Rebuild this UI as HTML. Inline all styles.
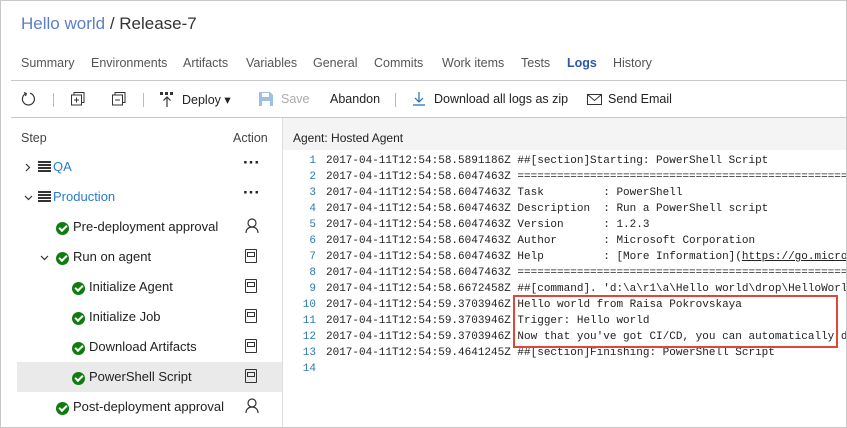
<!DOCTYPE html>
<html><head><meta charset="utf-8"><style>
*{margin:0;padding:0;box-sizing:border-box}
body{width:847px;height:428px;overflow:hidden;background:#fff;font-family:"Liberation Sans",sans-serif;color:#333;position:relative}
.frame{position:absolute;left:0;top:0;width:847px;height:428px;border:1px solid #c8c8c8}
.abs{position:absolute;white-space:nowrap}
.title{left:21px;top:14px;font-size:17px;color:#333}
.title span{color:#5b7fc7}
.tab{top:56px;font-size:12.5px;color:#555}
.hline{position:absolute;left:11px;right:1px;height:1px;background:#c8c8c8}
.tb{top:92px;font-size:12.5px;color:#222}
.sep{position:absolute;width:1px;height:14px;background:#bbb;top:93px}
.tree{font-size:13px;color:#222}
.ok{position:absolute;width:13px;height:13px;border-radius:50%;background:#107c10}
.ok:after{content:"";position:absolute;left:3px;top:3px;width:6px;height:3px;border-left:2px solid #fff;border-bottom:2px solid #fff;transform:rotate(-45deg)}
.log{font-family:"Liberation Mono",monospace;font-size:11px;color:#222;line-height:16px}
.ln{position:absolute;left:283px;width:33px;text-align:right;color:#2b7bb9;font-family:"Liberation Mono",monospace;font-size:11px;line-height:16px}
.srv{position:absolute;width:13px;height:12px;background:repeating-linear-gradient(#333 0 2px,#fff 2px 3px)}
.note{position:absolute;width:12px;height:14px;border:1.5px solid #333;border-radius:1px}
.note:after{content:"";position:absolute;left:1px;right:1px;top:2px;height:3px;border:1px solid #333}
.dots{position:absolute;left:243px;font-weight:bold;font-size:17px;letter-spacing:0;color:#222;line-height:10px}
</style></head><body>
<div class="frame"></div>
<div class="abs title"><span>Hello world</span> / Release-7</div>
<div class="abs tab" style="left:21px">Summary</div>
<div class="abs tab" style="left:91px">Environments</div>
<div class="abs tab" style="left:183px">Artifacts</div>
<div class="abs tab" style="left:246px">Variables</div>
<div class="abs tab" style="left:313px">General</div>
<div class="abs tab" style="left:374px">Commits</div>
<div class="abs tab" style="left:442px">Work items</div>
<div class="abs tab" style="left:521px">Tests</div>
<div class="abs tab" style="left:567px;color:#2f57a8;font-weight:bold">Logs</div>
<div class="abs tab" style="left:613px">History</div>
<div class="hline" style="top:80px"></div>
<svg class="abs" style="left:21px;top:91px" width="16" height="16" viewBox="0 0 16 16"><path d="M5 2.5A6 6 0 1 0 9 2.2" fill="none" stroke="#333" stroke-width="1.2"/><path d="M3 1.5L5.3 2.6 4.5 5" fill="none" stroke="#333" stroke-width="1.2"/></svg>
<div class="sep" style="left:53px"></div>
<svg class="abs" style="left:71px;top:92px" width="14" height="14"><rect x="3" y="0.5" width="10" height="10" fill="none" stroke="#333"/><rect x="0.5" y="3" width="10" height="10" fill="#fff" stroke="#333"/><path d="M3 8h5M5.5 5.5v5" stroke="#333"/></svg>
<svg class="abs" style="left:112px;top:92px" width="14" height="14"><rect x="3" y="0.5" width="10" height="10" fill="none" stroke="#333"/><rect x="0.5" y="3" width="10" height="10" fill="#fff" stroke="#333"/><path d="M3 8h5" stroke="#333"/></svg>
<div class="sep" style="left:143px"></div>
<svg class="abs" style="left:160px;top:92px" width="14" height="16"><rect x="0" y="0" width="3" height="3" fill="#333"/><rect x="5" y="0" width="3" height="3" fill="#333"/><rect x="10" y="0" width="3" height="3" fill="#333"/><path d="M7 15V5M3.5 8.5L7 5l3.5 3.5" fill="none" stroke="#333" stroke-width="1.2"/></svg>
<div class="abs tb" style="left:182px">Deploy ▾</div>
<svg class="abs" style="left:259px;top:92px" width="14" height="14"><path d="M0 0h11l3 3v11H0z" fill="#9bbfe6"/><rect x="3" y="1" width="7" height="4" fill="#fff"/><rect x="3" y="9" width="8" height="5" fill="#fff"/></svg>
<div class="abs tb" style="left:281px;color:#aaa">Save</div>
<div class="abs tb" style="left:330px">Abandon</div>
<div class="sep" style="left:395px"></div>
<svg class="abs" style="left:412px;top:92px" width="14" height="14"><path d="M7 0v10M3 6l4 4 4-4M1 13h12" fill="none" stroke="#2b6cb0" stroke-width="1.2"/></svg>
<div class="abs tb" style="left:434px">Download all logs as zip</div>
<svg class="abs" style="left:587px;top:94px" width="15" height="11"><rect x="0.5" y="0.5" width="14" height="10" fill="none" stroke="#333"/><path d="M0.5 0.5l7 6 7-6" fill="none" stroke="#333"/></svg>
<div class="abs tb" style="left:608px">Send Email</div>
<div class="hline" style="top:117px"></div>
<div class="abs" style="left:283px;top:118px;width:563px;height:32px;background:#f4f4f4"></div>
<div class="abs" style="left:282px;top:118px;width:1px;height:309px;background:#ddd"></div>
<div class="abs" style="left:293px;top:131px;font-size:12px;color:#222">Agent: Hosted Agent</div>
<div class="abs" style="left:21px;top:131px;font-size:12.5px;color:#444">Step</div>
<div class="abs" style="left:233px;top:131px;font-size:12.5px;color:#444">Action</div>
<div class="abs" style="left:17px;top:362px;width:265px;height:30px;background:#eaeaea"></div>
<svg class="abs" style="left:25px;top:163px" width="6" height="9"><path d="M1 1l3.5 3.5L1 8" fill="none" stroke="#333" stroke-width="1.2"/></svg>
<div class="srv" style="left:38px;top:161px"></div>
<div class="abs tree" style="left:53px;top:159px;color:#2b7bd0">QA</div>
<svg class="abs" style="left:24px;top:195px" width="9" height="6"><path d="M1 1l3.5 3.5L8 1" fill="none" stroke="#333" stroke-width="1.2"/></svg>
<div class="srv" style="left:38px;top:191px"></div>
<div class="abs tree" style="left:53px;top:189px;color:#2b7bd0">Production</div>
<div class="dots" style="top:158px">···</div>
<div class="dots" style="top:188px">···</div>
<div class="ok" style="left:56px;top:222px"></div><div class="abs tree" style="left:73px;top:219px">Pre-deployment approval</div>
<svg class="abs" style="left:40px;top:255px" width="9" height="6"><path d="M1 1l3.5 3.5L8 1" fill="none" stroke="#333" stroke-width="1.2"/></svg>
<div class="ok" style="left:56px;top:252px"></div><div class="abs tree" style="left:73px;top:249px">Run on agent</div>
<div class="ok" style="left:72px;top:282px"></div><div class="abs tree" style="left:89px;top:279px">Initialize Agent</div>
<div class="ok" style="left:72px;top:312px"></div><div class="abs tree" style="left:89px;top:309px">Initialize Job</div>
<div class="ok" style="left:72px;top:342px"></div><div class="abs tree" style="left:89px;top:339px">Download Artifacts</div>
<div class="ok" style="left:72px;top:372px"></div><div class="abs tree" style="left:89px;top:369px">PowerShell Script</div>
<div class="ok" style="left:56px;top:402px"></div><div class="abs tree" style="left:73px;top:399px">Post-deployment approval</div>
<svg class="abs" style="left:245px;top:218px" width="14" height="15"><circle cx="7" cy="5" r="4" fill="none" stroke="#333" stroke-width="1.2"/><path d="M1 15c0-4 3-6 6-6s6 2 6 6" fill="none" stroke="#333" stroke-width="1.2"/></svg>
<svg class="abs" style="left:245px;top:398px" width="14" height="15"><circle cx="7" cy="5" r="4" fill="none" stroke="#333" stroke-width="1.2"/><path d="M1 15c0-4 3-6 6-6s6 2 6 6" fill="none" stroke="#333" stroke-width="1.2"/></svg>
<div class="note" style="left:245px;top:249px"></div>
<div class="note" style="left:245px;top:279px"></div>
<div class="note" style="left:245px;top:309px"></div>
<div class="note" style="left:245px;top:339px"></div>
<div class="note" style="left:245px;top:369px"></div>
<div class="ln" style="top:153px">1<br>2<br>3<br>4<br>5<br>6<br>7<br>8<br>9<br>10<br>11<br>12<br>13<br>14</div>
<div class="abs log" style="left:326px;top:153px;width:520px;overflow:hidden"><pre style="font:inherit">2017-04-11T12:54:58.5891186Z ##[section]Starting: PowerShell Script
2017-04-11T12:54:58.6047463Z ==============================================================
2017-04-11T12:54:58.6047463Z Task         : PowerShell
2017-04-11T12:54:58.6047463Z Description  : Run a PowerShell script
2017-04-11T12:54:58.6047463Z Version      : 1.2.3
2017-04-11T12:54:58.6047463Z Author       : Microsoft Corporation
2017-04-11T12:54:58.6047463Z Help         : [More Information](<u>https://go.microsoft.com</u>)
2017-04-11T12:54:58.6047463Z ==============================================================
2017-04-11T12:54:58.6672458Z ##[command]. 'd:\a\r1\a\Hello world\drop\HelloWorld.ps1'
2017-04-11T12:54:59.3703946Z Hello world from Raisa Pokrovskaya
2017-04-11T12:54:59.3703946Z Trigger: Hello world
2017-04-11T12:54:59.3703946Z Now that you've got CI/CD, you can automatically deploy
2017-04-11T12:54:59.4641245Z ##[section]Finishing: PowerShell Script</pre></div>
<div class="abs" style="left:513px;top:295px;width:325px;height:53px;border:2px solid #e0463a"></div>
</body></html>
